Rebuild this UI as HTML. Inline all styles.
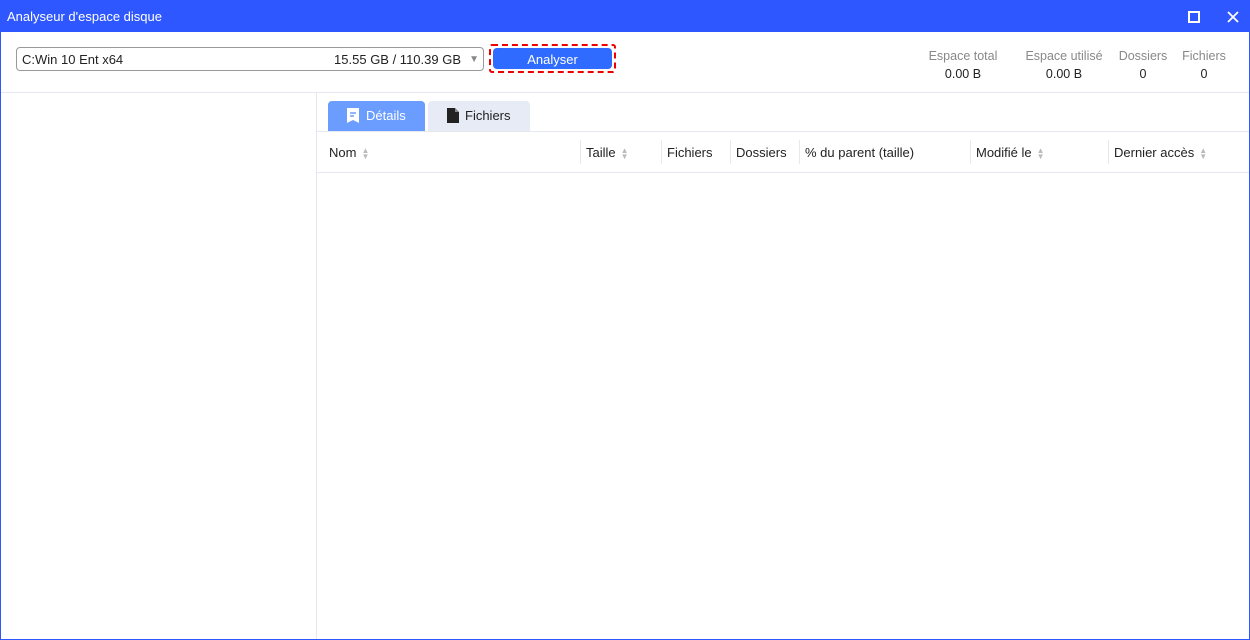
<!DOCTYPE html><html><head><style>
*{margin:0;padding:0;box-sizing:border-box}
body{width:1250px;height:640px;overflow:hidden;font-family:"Liberation Sans",sans-serif;font-size:13px;color:#222;background:#fff;position:relative}
.frame{position:absolute;inset:0;border:1px solid #2f57ff;border-top:none}
.title{position:absolute;left:0;top:0;width:1250px;height:32px;background:#2f57ff;color:#fff;font-size:13px;line-height:34px;padding-left:7px}
.abs{position:absolute}
.sel{left:16px;top:47px;width:468px;height:24px;border:1px solid #999;border-radius:4px;line-height:23px;padding-left:5px}
.btn{left:489px;top:44px;width:127px;height:29px;border:2px dashed #e00;border-radius:3px;padding:2px}
.btn div{background:#2f6bff;color:#fff;height:100%;border-radius:4px;text-align:center;line-height:23px}
.stat{text-align:center;font-size:12.5px}
.stat .l{color:#888}
.stat .v{margin-top:4px}
.hl{height:1px;background:#e5e8ee}
.th{top:132px;height:40px;line-height:41px;font-size:13px}
.sep{top:140px;width:1px;height:24px;background:#e5e8ee}
.arr{color:#bbb;font-size:8px;display:inline-block;line-height:6px;vertical-align:middle;margin-left:5px}
</style></head><body>
<div class="title">Analyseur d'espace disque</div>
<svg class="abs" style="left:1188px;top:11px" width="12" height="12"><rect x="1" y="1" width="10" height="10" fill="none" stroke="#fff" stroke-width="2"/></svg>
<svg class="abs" style="left:1227px;top:11px" width="12" height="12"><path d="M1 1L11 11M11 1L1 11" stroke="#fff" stroke-width="1.8"/></svg>
<div class="abs sel">C:Win 10 Ent x64<span class="abs" style="right:22px;top:0">15.55 GB / 110.39 GB</span><span class="abs" style="right:4px;top:0;color:#888;font-size:10px">▼</span></div>
<div class="abs btn"><div>Analyser</div></div>
<div class="abs stat" style="left:920px;top:49px;width:86px"><div class="l">Espace total</div><div class="v">0.00 B</div></div>
<div class="abs stat" style="left:1016px;top:49px;width:96px"><div class="l">Espace utilisé</div><div class="v">0.00 B</div></div>
<div class="abs stat" style="left:1113px;top:49px;width:60px"><div class="l">Dossiers</div><div class="v">0</div></div>
<div class="abs stat" style="left:1175px;top:49px;width:58px"><div class="l">Fichiers</div><div class="v">0</div></div>
<div class="abs hl" style="left:1px;top:92px;width:1248px"></div>
<div class="abs" style="left:316px;top:93px;width:1px;height:547px;background:#e5e8ee"></div>
<div class="abs" style="left:328px;top:101px;width:97px;height:30px;background:#6b9cff;border-radius:4px 4px 0 0;color:#fff;line-height:30px;padding-left:38px">Détails</div>
<svg class="abs" style="left:347px;top:108px" width="12" height="15"><path d="M0 0H12V15L6 12L0 15Z" fill="#fff"/><path d="M3 5H9M3 8H7" stroke="#6b9cff" stroke-width="1.4"/></svg>
<div class="abs" style="left:428px;top:101px;width:102px;height:30px;background:#e6ebf5;border-radius:4px 4px 0 0;line-height:30px;padding-left:37px">Fichiers</div>
<svg class="abs" style="left:447px;top:108px" width="12" height="15"><path d="M0 0H8L12 4V15H0Z" fill="#222"/><path d="M8 0V4H12" fill="#888"/></svg>
<div class="abs hl" style="left:317px;top:131px;width:932px"></div>
<div class="abs hl" style="left:317px;top:172px;width:932px"></div>
<div class="abs th" style="left:329px">Nom<span class="arr">▲<br>▼</span></div>
<div class="abs sep" style="left:580px"></div>
<div class="abs th" style="left:586px">Taille<span class="arr">▲<br>▼</span></div>
<div class="abs sep" style="left:661px"></div>
<div class="abs th" style="left:667px">Fichiers</div>
<div class="abs sep" style="left:730px"></div>
<div class="abs th" style="left:736px">Dossiers</div>
<div class="abs sep" style="left:799px"></div>
<div class="abs th" style="left:805px">% du parent (taille)</div>
<div class="abs sep" style="left:970px"></div>
<div class="abs th" style="left:976px">Modifié le<span class="arr">▲<br>▼</span></div>
<div class="abs sep" style="left:1108px"></div>
<div class="abs th" style="left:1114px">Dernier accès<span class="arr">▲<br>▼</span></div>
<div class="frame"></div>
</body></html>
